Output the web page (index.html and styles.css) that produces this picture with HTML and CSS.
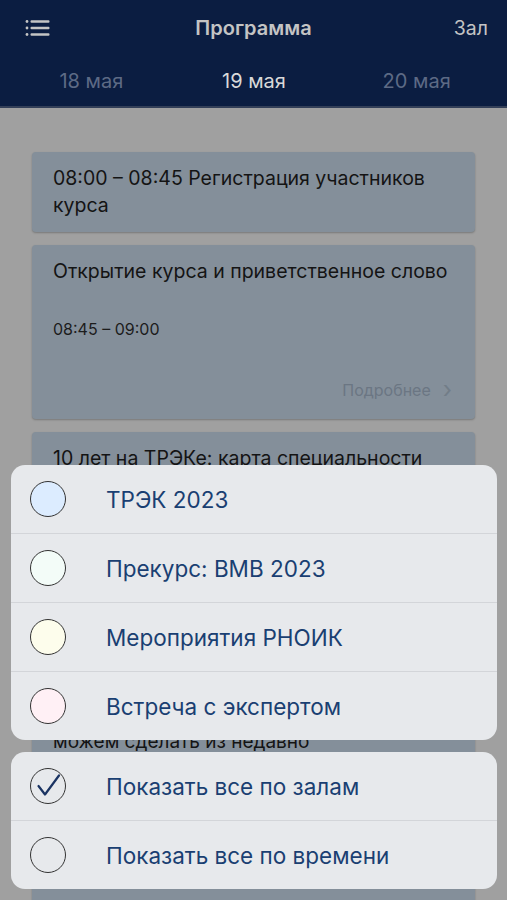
FILE: index.html
```html
<!DOCTYPE html>
<html lang="ru">
<head>
  <meta charset="UTF-8">
  <meta name="viewport" content="width=device-width, initial-scale=1.0">
  <link rel="stylesheet" href="styles.css">
  <title>Программа</title>
</head>
<body>
  <div id="app">
    <header class="topbar">
      <div class="nav">
        <svg class="menu-icon" width="24" height="16" viewBox="0 0 24 16">
          <circle cx="1.5" cy="1.5" r="1.4" />
          <circle cx="1.5" cy="8" r="1.4" />
          <circle cx="1.5" cy="14.5" r="1.4" />
          <rect x="5" y="0.3" width="19" height="2.4" rx="1" />
          <rect x="5" y="6.8" width="19" height="2.4" rx="1" />
          <rect x="5" y="13.3" width="19" height="2.4" rx="1" />
        </svg>
        <div class="title">Программа</div>
        <div class="nav-right">Зал</div>
      </div>
      <div class="days">
        <div class="day">18 мая</div>
        <div class="day active">19 мая</div>
        <div class="day">20 мая</div>
      </div>
    </header>

    <main class="schedule">
      <div class="card">
        <div class="card-title">08:00 – 08:45 Регистрация участников курса</div>
      </div>

      <div class="card">
        <div class="card-title">Открытие курса и приветственное слово</div>
        <div class="card-time">08:45 – 09:00</div>
        <div class="card-more">Подробнее <span class="chevron">›</span></div>
      </div>

      <div class="card tall">
        <div class="card-title">10 лет на ТРЭКе: карта специальности</div>
        <div class="card-time">09:00 – 09:40</div>
        <div class="card-desc">
          Лекция о том, как за десять лет<br>
          изменилась специальность, какие<br>
          направления стали ключевыми и<br>
          какие навыки нужны врачу сегодня.<br>
          Обсудим, что удалось сделать,<br>
          какие задачи остаются открытыми<br>
          и что в нашей практике мы<br>
          можем сделать из недавно<br>
          появившихся возможностей<br>
          уже в ближайшие годы.
        </div>
      </div>
    </main>

    <div class="sheet">
      <div class="sheet-group">
        <div class="option"><span class="radio blue"></span>ТРЭК 2023</div>
        <div class="option"><span class="radio mint"></span>Прекурс: ВМВ 2023</div>
        <div class="option"><span class="radio yellow"></span>Мероприятия РНОИК</div>
        <div class="option"><span class="radio pink"></span>Встреча с экспертом</div>
      </div>
      <div class="sheet-group">
        <div class="option">
          <span class="radio checked">
            <svg width="36" height="36" viewBox="0 0 36 36">
              <path d="M8.5 18 L15 26.5 L29 7.5" fill="none" stroke="#1b3463" stroke-width="2.2" stroke-linecap="round" stroke-linejoin="round" />
            </svg>
          </span>Показать все по залам
        </div>
        <div class="option"><span class="radio"></span>Показать все по времени</div>
      </div>
    </div>
  </div>
</body>
</html>
```

FILE: styles.css
```css
html, body {
  margin: 0;
  height: 100%;
}

body {
  font-family: Inter, "Liberation Sans", Arial, sans-serif;
  background-color: #a0a0a0;
  overflow: hidden;
}

#app {
  position: relative;
  height: 900px;
  overflow: hidden;
}

/* header */

.topbar {
  background-color: #0b1d41;
  height: 106px;
  border-bottom: 2px solid #333f58;
}

.nav {
  display: grid;
  grid-template-columns: 1fr auto 1fr;
  align-items: center;
  height: 56px;
  padding: 0 19px;
}

.menu-icon {
  fill: #c4c4c4;
  width: 25px;
  margin: -1px 0 0 6px;
}

.title {
  color: #c4c4c4;
  font-size: 20px;
  font-weight: 600;
}

.nav-right {
  color: #c4c4c4;
  font-size: 19.5px;
  text-align: right;
}

.days {
  display: grid;
  grid-template-columns: repeat(3, 1fr);
  text-align: center;
  padding: 0 9px 0 10px;
  margin-top: 13px;
}

.day {
  color: #5d6a85;
  font-size: 20px;
}

.day.active {
  color: #d9d9d9;
}

/* cards */

.schedule {
  display: flex;
  flex-direction: column;
  gap: 13px;
  padding: 44px 32px 0;
}

.card {
  background-color: #848f9a;
  border-radius: 4px;
  padding: 13px 21px;
  box-shadow: 0 1px 2px rgba(0, 0, 0, 0.25);
  color: #141414;
}

.card-title {
  font-size: 19.5px;
  line-height: 27px;
}

.card-time {
  font-size: 16px;
  line-height: 20px;
  margin-top: 34px;
  color: #1c1c1c;
}

.card-more {
  display: flex;
  justify-content: flex-end;
  align-items: center;
  gap: 12px;
  margin-top: 41px;
  margin-bottom: 6px;
  font-size: 16px;
  line-height: 20px;
  color: #6b7683;
}

.chevron {
  font-size: 24px;
  color: #727d88;
  margin-right: 2px;
}

.card.tall {
  height: 560px;
}

.card-desc {
  font-size: 19px;
  line-height: 27px;
  margin-top: 13px;
}

/* action sheet */

.sheet {
  position: absolute;
  left: 11px;
  right: 10px;
  bottom: 11px;
  display: flex;
  flex-direction: column;
  gap: 12px;
}

.sheet-group {
  background-color: #e7e9ec;
  border-radius: 14px;
  overflow: hidden;
}

.option {
  display: flex;
  align-items: center;
  height: 69px;
  font-size: 22.5px;
  color: #1a3f72;
  border-top: 1px solid #d3d5d9;
  box-sizing: border-box;
}

.option:first-child {
  border-top: none;
  height: 68px;
}

.radio {
  flex: none;
  width: 34px;
  height: 34px;
  border: 1.6px solid #333333;
  border-radius: 50%;
  margin: 0 40px 0 19px;
  position: relative;
}

.radio svg {
  position: absolute;
  left: -1px;
  top: -1px;
}

.radio.blue { background-color: #dcecff; }
.radio.mint { background-color: #f3fcf8; }
.radio.yellow { background-color: #fdfdec; }
.radio.pink { background-color: #fff0f5; }
```
